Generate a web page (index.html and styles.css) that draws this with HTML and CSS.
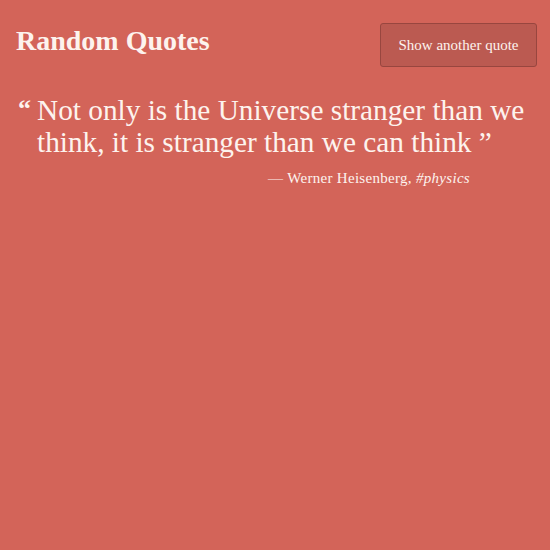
FILE: index.html
```html
<!DOCTYPE html>
<html>
<head>
<meta charset="utf-8">
<link rel="stylesheet" href="styles.css">
</head>
<body>
<header class="top">
  <h1 class="title">Random Quotes</h1>
  <button class="btn">Show another quote</button>
</header>
<main class="quote">
  <p class="text"><span class="mark">“</span>Not only is the Universe stranger than we think, it is stranger than we can think ”</p>
  <p class="author">— Werner Heisenberg, <em>#physics</em></p>
</main>
</body>
</html>
```
FILE: styles.css
```css
html, body {
  margin: 0;
  padding: 0;
  background: #d36459;
  color: #fdf3ee;
  font-family: "Liberation Serif", "DejaVu Serif", serif;
}
body {
  width: 550px;
  height: 550px;
}
.top {
  display: flex;
  justify-content: space-between;
  align-items: flex-start;
  padding: 23px 13px 0 16px;
}
.title {
  margin: 2px 0 0;
  font-size: 28px;
  font-weight: bold;
  line-height: 32px;
}
.btn {
  width: 157px;
  height: 44px;
  background: #bb5a51;
  border: 1px solid #98463f;
  border-radius: 3px;
  color: #fdf3ee;
  font-family: "Liberation Serif", serif;
  font-size: 15px;
  padding: 0;
}
.quote {
  padding: 0 10px 0 18px;
  margin-top: 27px;
}
.text {
  margin: 0;
  font-size: 29.3px;
  line-height: 32px;
  padding-left: 19px;
  text-indent: -19px;
}
.mark {
  display: inline-block;
  text-indent: 0;
  width: 19px;
  font-size: 26px;
  font-weight: bold;
  vertical-align: top;
  line-height: 30px;
}
.author {
  margin: 12px 70px 0 0;
  text-align: right;
  font-size: 15px;
  letter-spacing: 0.3px;
}
.author em {
  font-style: italic;
}
```
